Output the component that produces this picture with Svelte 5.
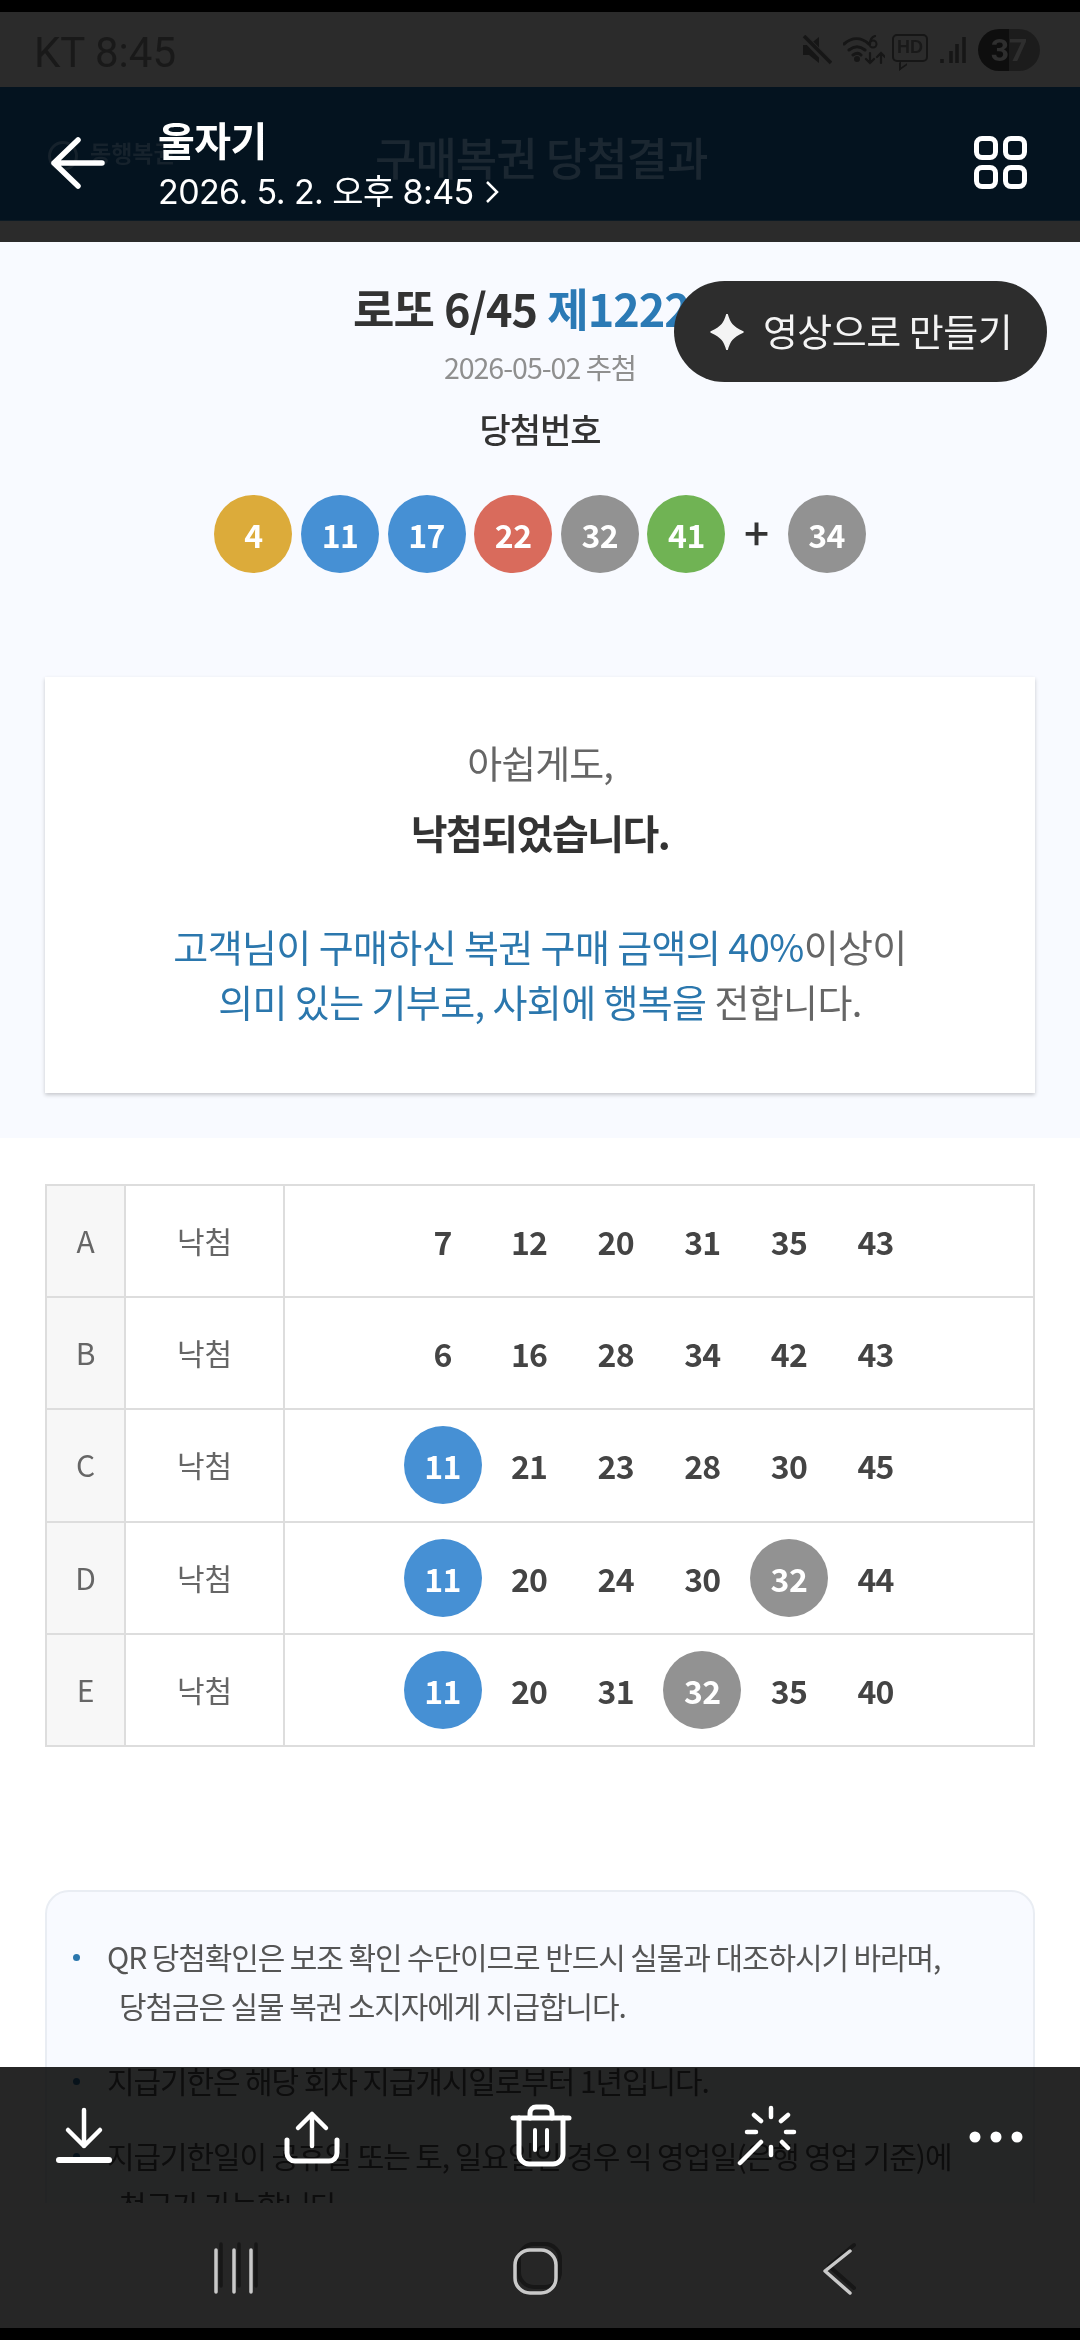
<script>
	const colors = { 4: 'gold', 11: 'blue', 17: 'blue', 22: 'red', 32: 'gray', 34: 'gray', 41: 'green' };
	const winning = [4, 11, 17, 22, 32, 41];
	const bonus = 34;
	const hits = [11, 32];
	const games = [
		{ id: 'A', nums: [7, 12, 20, 31, 35, 43] },
		{ id: 'B', nums: [6, 16, 28, 34, 42, 43] },
		{ id: 'C', nums: [11, 21, 23, 28, 30, 45] },
		{ id: 'D', nums: [11, 20, 24, 30, 32, 44] },
		{ id: 'E', nums: [11, 20, 31, 32, 35, 40] }
	];
</script>

<div class="phone">
	<div class="cutout"></div>

	<div class="statusbar">
		<span class="clock">KT 8:45</span>
		<div class="status-icons">
			<svg width="32" height="30" viewBox="0 0 32 30">
				<path d="M3 10h6l10-8v26l-10-8H3z" fill="#161616" />
				<path d="M4 2l26 27" stroke="#2b2b2b" stroke-width="7" />
				<path d="M4 1l27 27" stroke="#161616" stroke-width="3.5" />
			</svg>
			<svg class="wifi" width="42" height="30" viewBox="0 0 42 30" fill="none" stroke="#161616" stroke-width="3" stroke-linecap="round">
				<path d="M1 9c8-7 17-7 25 0M6 15c5-4 11-4 16 0M10 20c3-2 6-2 8 0" />
				<circle cx="14" cy="24" r="1.5" fill="#161616" />
				<circle cx="30" cy="9" r="3.5" stroke-width="2" />
				<path d="M32 1c-3 1-5 4-5 8M27 18v10M23 24l4 4 4-4M38 28V18M34 22l4-4 4 4" stroke-width="2.2" />
			</svg>
			<span class="hd">HD</span>
			<svg width="28" height="30" viewBox="0 0 28 30" stroke="#161616" stroke-width="3.5">
				<path d="M3 24v4M12 16v12M25 2v26M18 9v19" />
			</svg>
			<span class="battery">37</span>
		</div>
	</div>

	<header class="topbar">
		<span class="under-dot"></span>
		<span class="under-logo">동행복권</span>
		<span class="under-title">구매복권 당첨결과</span>
		<svg class="back" width="60" height="60" viewBox="0 0 60 60" fill="none" stroke="#fff" stroke-width="5.5" stroke-linecap="round" stroke-linejoin="round">
			<path d="M5 30h48M29 7L5 30l24 23" />
		</svg>
		<div class="who">
			<div class="who-name">울자기</div>
			<div class="who-date">2026. 5. 2. 오후 8:45
				<svg width="16" height="24" viewBox="0 0 16 24" fill="none" stroke="#fff" stroke-width="2.5"><path d="M3 2l10 10L3 22" /></svg>
			</div>
		</div>
		<div class="grid-icon">
			<i></i><i></i><i></i><i></i>
		</div>
	</header>
	<div class="strip"></div>

	<main class="page">
		<section class="hero">
			<h1>로또 6/45 <em>제1222회</em></h1>
			<p class="draw-date">2026-05-02 추첨</p>
			<h2>당첨번호</h2>
			<div class="balls">
				{#each winning as n}
					<span class="ball {colors[n]}">{n}</span>
				{/each}
				<span class="plus">+</span>
				<span class="ball {colors[bonus]}">{bonus}</span>
			</div>
			<div class="card">
				<p class="sorry">아쉽게도,</p>
				<p class="lost">낙첨되었습니다.</p>
				<p class="donate"><em>고객님이 구매하신 복권 구매 금액의 40%</em>이상이<br /><em>의미 있는 기부로, 사회에 행복을</em> 전합니다.</p>
			</div>
		</section>

		<section class="results">
			{#each games as game}
				<div class="row">
					<div class="letter">{game.id}</div>
					<div class="state">낙첨</div>
					<div class="nums">
						{#each game.nums as n}
							<div class="num">
								{#if hits.includes(n)}
									<span class="ball small {colors[n]}">{n}</span>
								{:else}
									{n}
								{/if}
							</div>
						{/each}
					</div>
				</div>
			{/each}
		</section>

		<ul class="notes">
			<li>QR 당첨확인은 보조 확인 수단이므로 반드시 실물과 대조하시기 바라며,<br /><span class="indent">당첨금은 실물 복권 소지자에게 지급합니다.</span></li>
			<li>지급기한은 해당 회차 지급개시일로부터 1년입니다.</li>
			<li>지급기한일이 공휴일 또는 토, 일요일인 경우 익 영업일(은행 영업 기준)에<br /><span class="indent">청구가 가능합니다.</span></li>
		</ul>
	</main>

	<nav class="softkeys">
		<svg width="60" height="60" viewBox="0 0 60 60" fill="none" stroke-linecap="round">
			<path d="M17 3v42M35 3v42M52 3v42" stroke="#171717" stroke-width="3.5" />
			<path d="M12 9v42M30 9v42M47 9v42" stroke="#c9c9c9" stroke-width="3.5" />
		</svg>
		<svg width="60" height="60" viewBox="0 0 60 60" fill="none">
			<rect x="13" y="3" width="41" height="43" rx="15" stroke="#171717" stroke-width="4" />
			<rect x="9" y="9" width="41" height="43" rx="15" stroke="#c9c9c9" stroke-width="3.5" />
		</svg>
		<svg width="60" height="60" viewBox="0 0 60 60" fill="none" stroke-linecap="round" stroke-linejoin="round">
			<path d="M46 4L21 25l25 22" stroke="#171717" stroke-width="4" />
			<path d="M42 10L17 30l25 22" stroke="#c9c9c9" stroke-width="3.5" />
		</svg>
	</nav>
	<div class="chin"></div>

	<div class="toolbar-shade"></div>
	<div class="toolbar">
		<svg width="80" height="80" viewBox="0 0 80 80" fill="none" stroke="#fff" stroke-width="4.5" stroke-linecap="round" stroke-linejoin="round">
			<path d="M40 13v36M24 33l16 16 16-16" />
			<path d="M15 63h50" stroke-width="6" />
		</svg>
		<svg width="80" height="80" viewBox="0 0 80 80" fill="none" stroke="#fff" stroke-width="4.5" stroke-linecap="round" stroke-linejoin="round">
			<path d="M40 17v32M26 31l14-14 14 14" />
			<path d="M15 43v13a8 8 0 0 0 8 8h34a8 8 0 0 0 8-8V43" stroke-width="5" />
		</svg>
		<svg width="80" height="80" viewBox="0 0 80 80" fill="none" stroke="#fff" stroke-width="5" stroke-linecap="round" stroke-linejoin="round">
			<path d="M13 21h56" />
			<path d="M30 21v-5a6 6 0 0 1 6-6h10a6 6 0 0 1 6 6v5" />
			<path d="M19 21v36a10 10 0 0 0 10 10h24a10 10 0 0 0 10-10V21" />
			<path d="M35 33v20M47 33v20" stroke-width="4" />
		</svg>
		<svg width="80" height="80" viewBox="0 0 80 80" fill="none" stroke="#fff" stroke-width="4.5" stroke-linecap="round">
			<path d="M43 11v9M43 50v8M19 35h9M58 35h8M26 18l7 6M53 24l7-6M54 45l6 6" />
			<path d="M12 66l21-21" />
		</svg>
		<svg width="80" height="80" viewBox="0 0 80 80" fill="#fff">
			<circle cx="19" cy="40" r="5.5" /><circle cx="40" cy="40" r="5.5" /><circle cx="61" cy="40" r="5.5" />
		</svg>
	</div>

	<button class="make-video">
		<svg width="34" height="36" viewBox="0 0 34 36"><path d="M17 0c2.5 9 5 13 16 18-11 5-13.500 9-16 18-2.500-9-5-13-16-18C12 13 14.500 9 17 0z" fill="#f4f4f4" stroke="#f4f4f4" stroke-width="1.500" stroke-linejoin="round" /></svg>
		<span class="make-label">영상으로 만들기</span>
	</button>
</div>

<style>
	:global(body) {
		margin: 0;
		background: #000;
	}

	.phone {
		position: relative;
		width: 1080px;
		height: 2340px;
		overflow: hidden;
		display: flex;
		flex-direction: column;
		background: #fff;
		font-family: "Noto Sans CJK KR", "Noto Sans", sans-serif;
	}

	.cutout {
		height: 12px;
		background: #000;
		flex: none;
	}

	.statusbar {
		flex: none;
		height: 75px;
		background: #2b2b2b;
		display: flex;
		align-items: center;
		justify-content: space-between;
		padding: 0 40px 0 34px;
		color: #191919;
	}

	.clock {
		font-family: Roboto, sans-serif;
		font-size: 42px;
		margin-top: 6px;
	}

	.status-icons {
		display: flex;
		align-items: center;
		gap: 11px;
		margin-top: 1px;
	}

	.wifi {
		margin-right: -4px;
	}

	.hd {
		position: relative;
		font-family: "Liberation Sans", sans-serif;
		font-size: 18px;
		font-weight: 700;
		border: 2.5px solid #161616;
		border-radius: 5px;
		padding: 2px 3px;
		line-height: 1.1;
		margin-top: -4px;
	}

	.hd::after {
		content: "";
		position: absolute;
		left: 5px;
		bottom: -8px;
		width: 6px;
		height: 6px;
		border-left: 2.5px solid #161616;
		border-bottom: 2.5px solid #161616;
		transform: skewY(-35deg);
	}

	.battery {
		width: 62px;
		height: 42px;
		border-radius: 21px;
		background: linear-gradient(90deg, #0e0e0e 50%, #1c1c1c 50%);
		color: #2e2e2e;
		font-family: Roboto, sans-serif;
		font-size: 32px;
		font-weight: 700;
		line-height: 42px;
		text-align: center;
	}

	.topbar {
		position: relative;
		flex: none;
		height: 134px;
		background: #04131f;
		border-bottom: 1px solid #0c1a24;
		box-sizing: border-box;
		display: flex;
		align-items: center;
		color: #fff;
	}

	.under-dot {
		position: absolute;
		left: 48px;
		top: 54px;
		width: 24px;
		height: 24px;
		border: 3px solid #16222c;
		border-radius: 50%;
	}

	.under-logo {
		position: absolute;
		left: 90px;
		top: 48px;
		font-size: 23px;
		font-weight: 700;
		color: #16222c;
	}

	.under-title {
		position: absolute;
		left: 375px;
		top: 40px;
		font-size: 45px;
		font-weight: 500;
		letter-spacing: -1px;
		line-height: 60px;
		color: #1b2731;
	}

	.back {
		margin-left: 49px;
		margin-top: 18px;
		flex: none;
		position: relative;
	}

	.who {
		margin-left: 49px;
		margin-top: 20px;
		position: relative;
		font-family: Inter, "Noto Sans CJK KR", sans-serif;
	}

	.who-name {
		font-size: 40px;
		font-weight: 700;
		line-height: 52px;
		font-family: "Noto Sans CJK KR", sans-serif;
		letter-spacing: -0.5px;
	}

	.who-date {
		margin-top: 4px;
		font-size: 34px;
		line-height: 46px;
		letter-spacing: -0.6px;
		display: flex;
		align-items: center;
		gap: 10px;
	}

	.grid-icon {
		margin-left: auto;
		margin-right: 53px;
		margin-top: 18px;
		display: grid;
		grid-template-columns: 24px 24px;
		gap: 5px;
		position: relative;
	}

	.grid-icon i {
		display: block;
		box-sizing: border-box;
		width: 24px;
		height: 24px;
		border: 5px solid #fff;
		border-radius: 8px;
	}

	.strip {
		flex: none;
		height: 21px;
		background: #2b2b2b;
	}

	.page {
		height: 1961px;
		flex: none;
		overflow: hidden;
		color: #333;
	}

	.hero {
		height: 896px;
		box-sizing: border-box;
		background: #f8faff;
		padding: 36px 45px 0;
		display: flex;
		flex-direction: column;
		align-items: center;
	}

	h1 {
		margin: 0;
		font-size: 45px;
		line-height: 60px;
		font-weight: 700;
		letter-spacing: -1px;
		word-spacing: 1px;
		color: #333;
		align-self: flex-start;
		margin-left: 308px;
		white-space: nowrap;
	}

	h1 em {
		font-style: normal;
		color: #2b7ab5;
	}

	.draw-date {
		margin: 8px 0 0;
		font-size: 28.5px;
		line-height: 42px;
		letter-spacing: -1px;
		color: #8f8f8f;
	}

	h2 {
		margin: 18px 0 0;
		font-size: 34px;
		font-weight: 500;
		line-height: 46px;
		letter-spacing: -1px;
		color: #333;
	}

	.balls {
		margin-top: 43px;
		display: flex;
		align-items: center;
		gap: 8.6px;
	}

	.ball {
		width: 78px;
		height: 78px;
		flex: none;
		border-radius: 50%;
		display: flex;
		align-items: center;
		justify-content: center;
		color: #fff;
		font-size: 32px;
		font-weight: 700;
		letter-spacing: -0.5px;
	}

	.gold { background: #dcab3a; }
	.blue { background: #4690d4; }
	.red { background: #d96b5c; }
	.gray { background: #929292; }
	.green { background: #70b354; }

	.plus {
		width: 45px;
		text-align: center;
		font-size: 44px;
		font-weight: 500;
		line-height: 60px;
		margin-top: -6px;
	}

	.card {
		margin-top: 104px;
		width: 990px;
		height: 416px;
		flex: none;
		box-sizing: border-box;
		background: #fff;
		box-shadow: 0 2px 4px rgba(0, 0, 0, 0.2);
		text-align: center;
		padding-top: 57px;
	}

	.card p {
		margin: 0;
	}

	.sorry {
		font-size: 38px;
		line-height: 56px;
		letter-spacing: -1px;
		color: #666;
	}

	.card .lost {
		margin-top: 14px;
		font-size: 40px;
		font-weight: 700;
		line-height: 56px;
		letter-spacing: -1.5px;
		color: #333;
	}

	.card .donate {
		margin-top: 58px;
		font-size: 38px;
		line-height: 55px;
		letter-spacing: -0.6px;
		color: #666;
	}

	.donate em {
		font-style: normal;
		color: #2b77ad;
	}

	.results {
		margin: 46px 45px 0;
		border: 2px solid #ddd;
		border-bottom-width: 0;
	}

	.row {
		display: grid;
		grid-template-columns: 79px 159px 1fr;
		height: 112.2px;
		box-sizing: border-box;
		border-bottom: 2px solid #ddd;
	}

	.letter, .state {
		display: flex;
		align-items: center;
		justify-content: center;
		font-size: 30px;
		color: #666;
		border-right: 2px solid #ddd;
		padding-bottom: 2px;
	}

	.letter {
		background: #f7f7f7;
	}

	.nums {
		display: grid;
		grid-template-columns: repeat(6, 86.6px);
		justify-content: center;
	}

	.num {
		display: flex;
		align-items: center;
		justify-content: center;
		font-size: 32px;
		font-weight: 700;
		color: #444;
		letter-spacing: -0.8px;
	}

	.notes {
		margin: 143px 45px 0;
		padding: 40px 30px 0 60px;
		height: 500px;
		background: #f8faff;
		border: 2px solid #e9edf3;
		border-radius: 24px;
		list-style: none;
		font-size: 30px;
		line-height: 49px;
		letter-spacing: -1.1px;
		color: #555;
	}

	.notes li {
		position: relative;
		margin-bottom: 26px;
		white-space: nowrap;
	}

	.notes li::before {
		content: "";
		position: absolute;
		left: -34px;
		top: 22px;
		width: 7px;
		height: 7px;
		border-radius: 50%;
		background: #2b77ad;
	}

	.indent {
		margin-left: 12px;
	}

	.softkeys {
		flex: none;
		height: 125px;
		background: #262626;
		display: grid;
		grid-template-columns: repeat(3, 302px);
		justify-content: center;
		justify-items: center;
		align-items: center;
		padding: 10px 9px 0 0;
		box-sizing: border-box;
	}

	.chin {
		flex: 1;
		background: #000;
	}

	.toolbar-shade {
		position: absolute;
		left: 0;
		right: 0;
		top: 2067px;
		height: 136px;
		background: #262626;
		mix-blend-mode: multiply;
	}

	.toolbar {
		position: absolute;
		left: 0;
		right: 0;
		top: 2097px;
		display: grid;
		grid-template-columns: repeat(5, 228px);
		justify-content: center;
		justify-items: center;
	}

	.make-video {
		position: absolute;
		left: 674px;
		top: 281px;
		width: 373px;
		height: 101px;
		border: none;
		border-radius: 51px;
		background: #2d2d2d;
		color: #f3f3f3;
		font-family: inherit;
		font-size: 38px;
		letter-spacing: -0.5px;
		display: flex;
		align-items: center;
		justify-content: center;
		gap: 19px;
		padding: 0 0 0 1px;
	}

	.make-label {
		margin-bottom: 4px;
	}
</style>
